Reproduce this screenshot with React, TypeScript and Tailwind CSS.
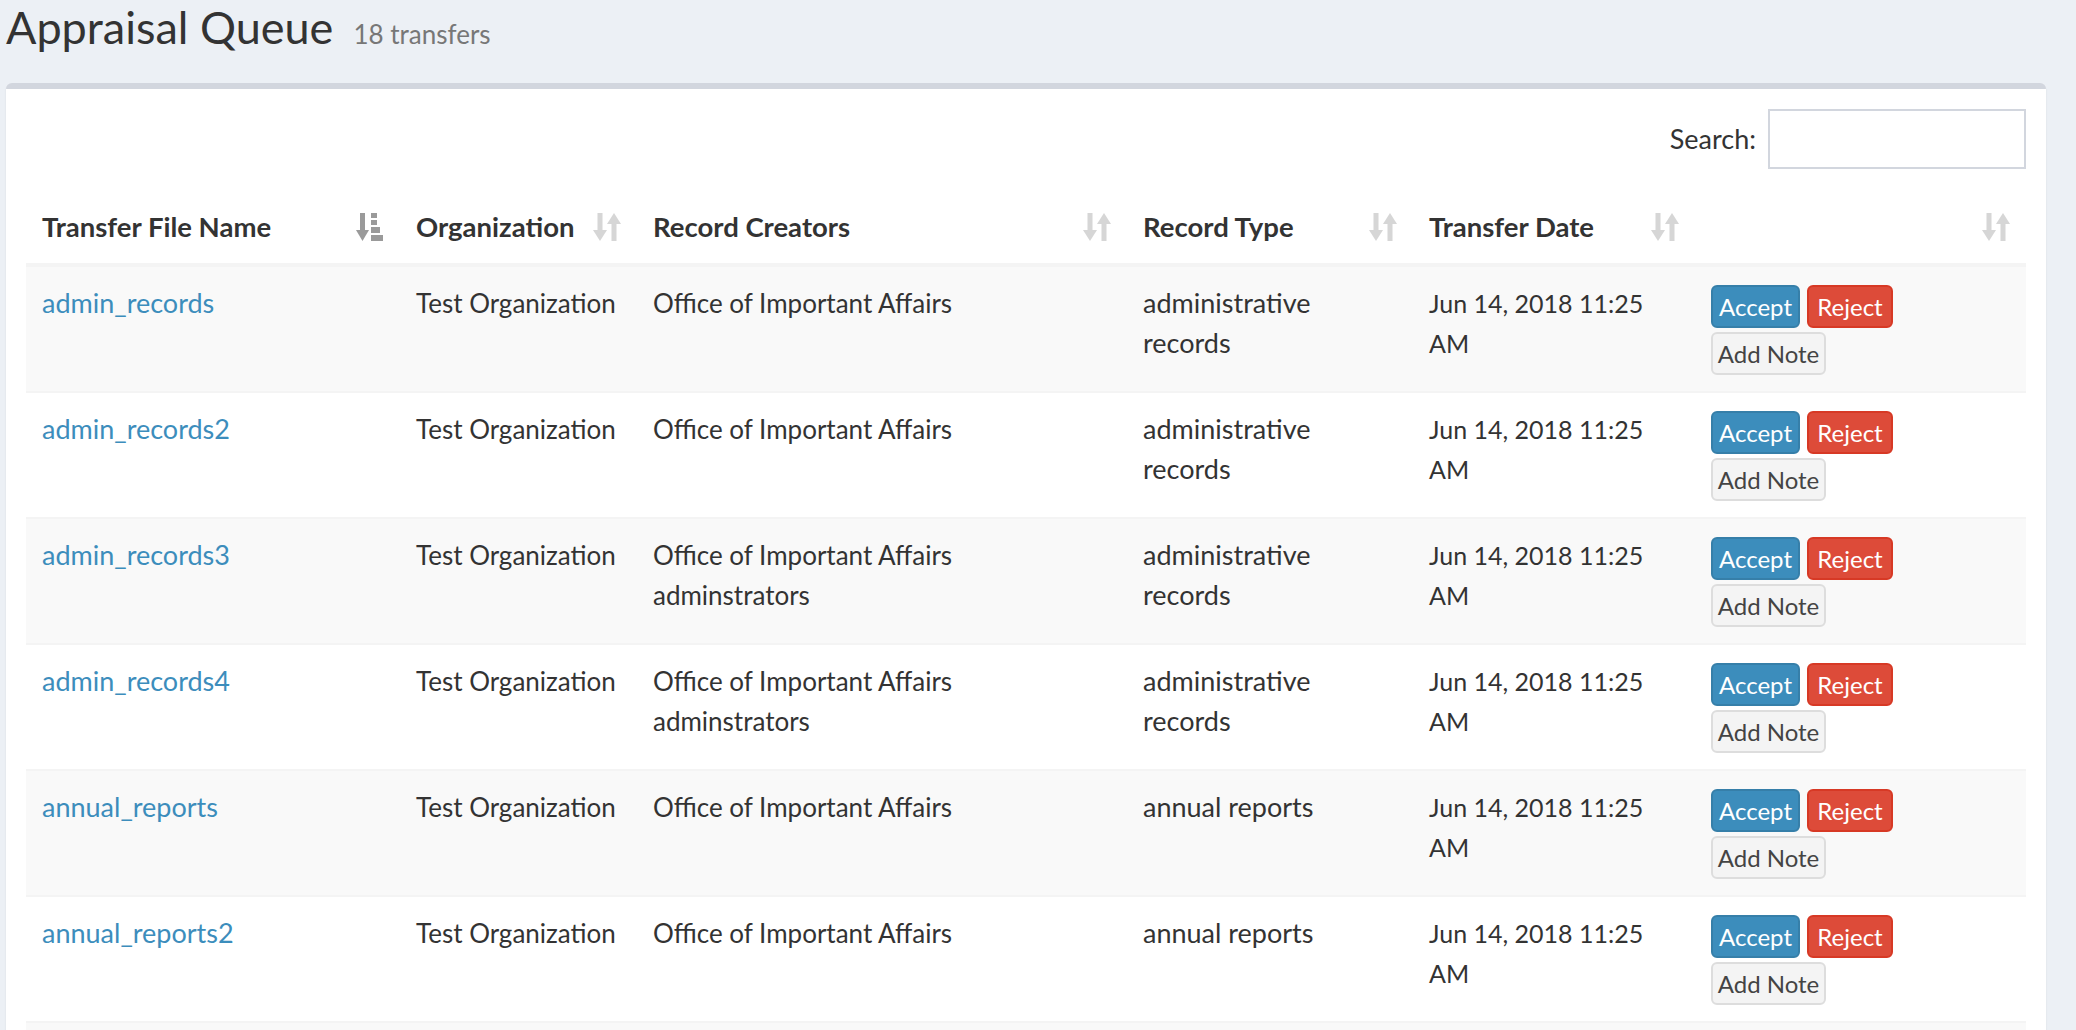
import React from 'react';

type Row = {
  name: string;
  org: string;
  creators: string[];
  type: string[];
};

const rows: Row[] = [
  { name: 'admin_records', org: 'Test Organization', creators: ['Office of Important Affairs'], type: ['administrative', 'records'] },
  { name: 'admin_records2', org: 'Test Organization', creators: ['Office of Important Affairs'], type: ['administrative', 'records'] },
  { name: 'admin_records3', org: 'Test Organization', creators: ['Office of Important Affairs', 'adminstrators'], type: ['administrative', 'records'] },
  { name: 'admin_records4', org: 'Test Organization', creators: ['Office of Important Affairs', 'adminstrators'], type: ['administrative', 'records'] },
  { name: 'annual_reports', org: 'Test Organization', creators: ['Office of Important Affairs'], type: ['annual reports'] },
  { name: 'annual_reports2', org: 'Test Organization', creators: ['Office of Important Affairs'], type: ['annual reports'] },
  { name: 'annual_reports3', org: 'Test Organization', creators: ['Office of Important Affairs'], type: ['annual reports'] },
];

const SortBoth = () => (
  <svg width="28" height="28" viewBox="0 0 28 28" fill="#d6d6d6">
    <rect x="4.5" y="0" width="5" height="18" />
    <polygon points="0,17 14,17 7,28" />
    <polygon points="14,11 28,11 21,0" />
    <rect x="18.5" y="10" width="5" height="18" />
  </svg>
);

const SortDesc = () => (
  <svg width="28" height="28" viewBox="0 0 28 28" fill="#9a9a9a">
    <rect x="4" y="0" width="5" height="18" />
    <polygon points="0,17 13,17 6.5,28" />
    <rect x="15" y="0" width="6" height="5" />
    <rect x="15" y="7" width="6" height="5" />
    <rect x="15" y="14" width="9" height="6" />
    <rect x="15" y="22" width="12" height="6" />
  </svg>
);

const Th = ({ children, sorted }: { children?: React.ReactNode; sorted?: boolean }) => (
  <th className="relative text-left font-bold align-bottom pl-4 pr-[60px] py-4 border-b-4 border-[#f4f4f4] leading-[40px] text-[27.5px] whitespace-nowrap">
    {children}
    <span className="absolute right-4 top-[22px]">{sorted ? <SortDesc /> : <SortBoth />}</span>
  </th>
);

const td = 'align-top px-4 py-4 border-t-2 border-[#f4f4f4] leading-[40px] whitespace-nowrap';

const App = () => {
  return (
    <div className="h-[1030px] overflow-hidden bg-[#ecf0f5] pl-[6px] pr-[30px] text-[#333] font-['Lato','Open_Sans',sans-serif] text-[26px]">
      <div className="flex items-baseline">
        <h1 className="text-[45px] leading-[54px] font-normal m-0">Appraisal Queue</h1>
        <span className="ml-[20px] text-[26px] text-[#777]">18 transfers</span>
      </div>

      <div className="mt-[29px] bg-white rounded-[6px] border-t-[6px] border-[#d2d6de] shadow-[0_2px_2px_rgba(0,0,0,0.1)] p-5">
        <div className="flex justify-end items-center">
          <label className="leading-[40px] text-[27px]">Search:</label>
          <input className="ml-3 w-[258px] h-[60px] border-2 border-[#d2d6de] outline-none" />
        </div>

        <table className="mt-[22px] w-full table-fixed border-collapse">
          <colgroup>
            <col className="w-[374px]" />
            <col className="w-[237px]" />
            <col className="w-[490px]" />
            <col className="w-[286px]" />
            <col className="w-[282px]" />
            <col />
          </colgroup>
          <thead>
            <tr>
              <Th sorted>Transfer File Name</Th>
              <Th>Organization</Th>
              <Th>Record Creators</Th>
              <Th>Record Type</Th>
              <Th>Transfer Date</Th>
              <Th />
            </tr>
          </thead>
          <tbody>
            {rows.map((r, i) => (
              <tr key={r.name} className={i % 2 === 0 ? 'bg-[#f9f9f9]' : 'bg-white'}>
                <td className={`${td} h-[126px] text-[27px]`}>
                  <a href="#" className="text-[#3c8dbc]">{r.name}</a>
                </td>
                <td className={td}>{r.org}</td>
                <td className={td}>
                  {r.creators.map((c) => (
                    <div key={c}>{c}</div>
                  ))}
                </td>
                <td className={`${td} text-[27px]`}>
                  {r.type.map((t) => (
                    <div key={t}>{t}</div>
                  ))}
                </td>
                <td className={`${td} text-[25px]`}>
                  <div>Jun 14, 2018 11:25</div>
                  <div>AM</div>
                </td>
                <td className="align-top px-4 py-4 border-t-2 border-[#f4f4f4]">
                  <div className="mt-[2px] flex flex-wrap gap-x-[7px] gap-y-1 w-[190px]">
                    <button className="w-[89px] h-[43px] rounded-[6px] border-2 border-[#367fa9] bg-[#3c8dbc] text-white text-[24px] leading-[39px] text-center">
                      Accept
                    </button>
                    <button className="w-[86px] h-[43px] rounded-[6px] border-2 border-[#d73925] bg-[#dd4b39] text-white text-[24px] leading-[39px] text-center">
                      Reject
                    </button>
                    <button className="w-[115px] h-[43px] rounded-[6px] border-2 border-[#ddd] bg-[#f4f4f4] text-[#444] text-[24px] leading-[39px] text-center">
                      Add Note
                    </button>
                  </div>
                </td>
              </tr>
            ))}
          </tbody>
        </table>
      </div>
    </div>
  );
};

export default App;
